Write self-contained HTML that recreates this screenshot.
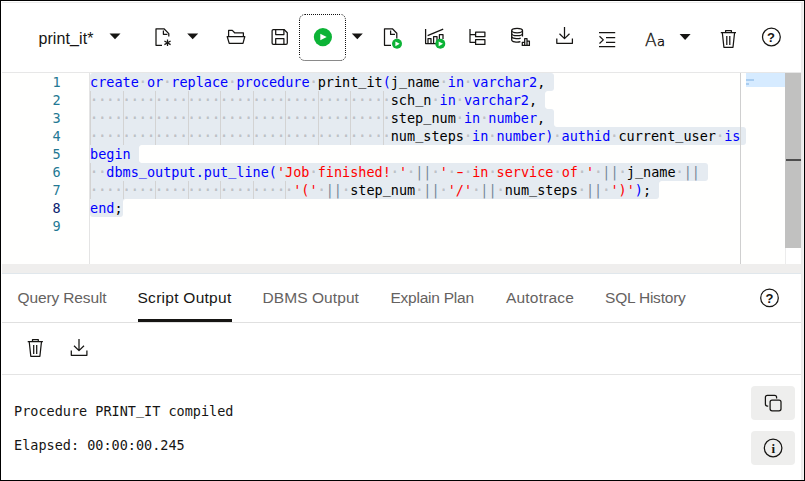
<!DOCTYPE html>
<html lang="en">
<head>
<meta charset="utf-8">
<title>SQL Worksheet</title>
<style>
html,body{margin:0;padding:0;}
body{width:805px;height:481px;overflow:hidden;background:#fff;position:relative;
  font-family:"Liberation Sans",sans-serif;color:#161513;}
.abs{position:absolute;}
#frame{left:0;top:0;width:803px;height:479px;border:1px solid #000;z-index:50;pointer-events:none;}
#topline{left:2px;top:2px;width:801px;height:1px;background:#ececec;}
#rightstrip{left:801px;top:2px;width:3px;height:478px;background:linear-gradient(90deg,#ebebeb 0,#ebebeb 2px,#f4f4f4 2px);z-index:40;}

/* toolbar */
#toolbar{left:1px;top:1px;width:803px;height:71px;background:#fff;}
#tbline{left:2px;top:72px;width:800px;height:1px;background:#e7e7e7;}
#wsname{left:38.4px;top:29px;letter-spacing:0.1px;font-size:16px;line-height:20px;white-space:nowrap;}
#aa{left:644.5px;top:26px;font-family:"DejaVu Sans Light","DejaVu Sans","Liberation Sans",sans-serif;font-weight:200;font-size:18.5px;line-height:28px;white-space:nowrap;transform-origin:0 0;transform:scaleX(0.92);-webkit-text-stroke:0.4px #161513;}
#aa .sm{font-size:13px;margin-left:0.3px;display:inline-block;transform-origin:0 0;transform:scaleX(1.1);}
.q{font-weight:bold;font-size:13px;line-height:14px;width:12px;text-align:center;}

/* editor */
#editor{left:1px;top:73px;width:803px;height:191px;background:#fffffe;overflow:hidden;}
#gutterline{left:89px;top:73px;width:1px;height:191px;background:#e4e4e4;}
#ruler{left:740px;top:73px;width:1px;height:191px;background:#cfcfcf;}
.mono{font-family:"DejaVu Sans Mono","Liberation Mono",monospace;font-size:13.5px;}
.ln{left:0.6px;width:60px;text-align:right;height:18px;line-height:18px;color:#237893;}
.ln.act{color:#0b216f;}
.sel{background:#e5ebf1;height:18px;}
.cl{left:90px;height:18px;line-height:18px;white-space:pre;color:#000;}
.k{color:#0000ff;}
.s{color:#ff0000;}
.w{position:relative;}
.w::before{content:"\00b7";position:absolute;left:0;top:0;line-height:normal;white-space:pre;color:rgba(51,51,51,0.24);font-weight:bold;}
.w2::before{content:"\00b7\00b7";}
.w25::before{content:"\00b7\00b7\00b7\00b7\00b7\00b7\00b7\00b7\00b7\00b7\00b7\00b7\00b7\00b7\00b7\00b7\00b7\00b7\00b7\00b7\00b7\00b7\00b7\00b7\00b7";}
.w37::before{content:"\00b7\00b7\00b7\00b7\00b7\00b7\00b7\00b7\00b7\00b7\00b7\00b7\00b7\00b7\00b7\00b7\00b7\00b7\00b7\00b7\00b7\00b7\00b7\00b7\00b7\00b7\00b7\00b7\00b7\00b7\00b7\00b7\00b7\00b7\00b7\00b7\00b7";}
.o{color:#778899;}
.u{position:relative;top:-2px;}
.u1{position:relative;top:-1.3px;}
.hy{display:inline-block;transform:scaleX(1.55);}
.cc{width:3px;height:3px;}
.ct{background:radial-gradient(circle at 100% 100%,rgba(229,235,241,0) 2.5px,#e5ebf1 3.5px);}
.cb{background:radial-gradient(circle at 100% 0%,rgba(229,235,241,0) 2.5px,#e5ebf1 3.5px);}
.ig{width:1px;background:#d3d3d3;}
#mmhl{left:746px;top:73px;width:39px;height:14px;background:#d6ebff;}
#sbtrack{left:785px;top:73px;width:16px;height:191px;background:#fff;border-left:1px solid #ececec;box-sizing:border-box;}
#sbslider{left:785px;top:73px;width:16px;height:175px;background:#c1c1c0;}
#sbmark{left:786px;top:159px;width:15px;height:2px;background:#4d4d4d;}

/* splitter */
#splitter{left:2px;top:264px;width:800px;height:9px;background:#efeeed;}
#splitline{left:2px;top:273px;width:800px;height:1px;background:#e0e7ec;}

/* tabs */
.tab{top:288px;font-size:15.5px;line-height:20px;white-space:nowrap;color:#65625f;}
.tab.on{color:#161513;}
#tabul{left:138px;top:319px;width:94px;height:3px;background:#161513;}
#tabline{left:2px;top:322px;width:800px;height:1px;background:#e0e0e0;}
#tb2line{left:2px;top:374px;width:800px;height:1px;background:#e4e4e4;}

#infoi{left:767.2px;top:441.3px;width:12px;text-align:center;font-family:"Liberation Serif",serif;font-weight:bold;font-size:13px;line-height:16px;z-index:12;}
/* output */
.out{left:14px;height:17px;line-height:17px;white-space:pre;color:#161513;}
.sbtn{left:751px;width:44px;height:34px;border-radius:4px;background:#eeeeed;}
</style>
</head>
<body>
<div class="abs" id="toolbar"></div>
<div class="abs" id="topline"></div>
<div class="abs" id="tbline"></div>

<div class="abs" id="wsname">print<span class="u1">_</span>it*</div>
<div class="abs" id="aa">A<span class="sm">a</span></div>
<div class="abs q" style="left:765px;top:31px;">?</div>

<!-- EDITOR -->
<div class="abs" id="editor"></div>
<div class="abs" id="gutterline"></div>

<div id="lines">
<div class="abs sel" style="left:90px;top:73px;width:463.5px;border-radius:3px 3px 3px 0;"></div>
<div class="abs mono ln" style="top:73px;">1</div>
<div class="abs mono cl" style="top:73px;"><span class="k">create</span><span class="w w1"> </span><span class="k">or</span><span class="w w1"> </span><span class="k">replace</span><span class="w w1"> </span><span class="k">procedure</span><span class="w w1"> </span>print<span class="u">_</span>it<span class="k">(</span>j<span class="u">_</span>name<span class="w w1"> </span><span class="k">in</span><span class="w w1"> </span><span class="k">varchar2</span>,</div>
<div class="abs sel" style="left:90px;top:91px;width:455.3px;border-radius:0;"></div>
<div class="abs cc ct" style="left:545.3px;top:91px;"></div>
<div class="abs cc cb" style="left:545.3px;top:106px;"></div>
<div class="abs ig" style="left:90px;top:91px;height:18px;"></div>
<div class="abs ig" style="left:123px;top:91px;height:18px;"></div>
<div class="abs ig" style="left:155px;top:91px;height:18px;"></div>
<div class="abs ig" style="left:188px;top:91px;height:18px;"></div>
<div class="abs ig" style="left:220px;top:91px;height:18px;"></div>
<div class="abs ig" style="left:253px;top:91px;height:18px;"></div>
<div class="abs ig" style="left:285px;top:91px;height:18px;"></div>
<div class="abs ig" style="left:318px;top:91px;height:18px;"></div>
<div class="abs ig" style="left:350px;top:91px;height:18px;"></div>
<div class="abs ig" style="left:383px;top:91px;height:18px;"></div>
<div class="abs mono ln" style="top:91px;">2</div>
<div class="abs mono cl" style="top:91px;"><span class="w w37">                                     </span>sch<span class="u">_</span>n<span class="w w1"> </span><span class="k">in</span><span class="w w1"> </span><span class="k">varchar2</span>,</div>
<div class="abs sel" style="left:90px;top:109px;width:463.5px;border-radius:0 3px 0 0;"></div>
<div class="abs cc cb" style="left:553.5px;top:124px;"></div>
<div class="abs ig" style="left:90px;top:109px;height:18px;"></div>
<div class="abs ig" style="left:123px;top:109px;height:18px;"></div>
<div class="abs ig" style="left:155px;top:109px;height:18px;"></div>
<div class="abs ig" style="left:188px;top:109px;height:18px;"></div>
<div class="abs ig" style="left:220px;top:109px;height:18px;"></div>
<div class="abs ig" style="left:253px;top:109px;height:18px;"></div>
<div class="abs ig" style="left:285px;top:109px;height:18px;"></div>
<div class="abs ig" style="left:318px;top:109px;height:18px;"></div>
<div class="abs ig" style="left:350px;top:109px;height:18px;"></div>
<div class="abs ig" style="left:383px;top:109px;height:18px;"></div>
<div class="abs mono ln" style="top:109px;">3</div>
<div class="abs mono cl" style="top:109px;"><span class="w w37">                                     </span>step<span class="u">_</span>num<span class="w w1"> </span><span class="k">in</span><span class="w w1"> </span><span class="k">number</span>,</div>
<div class="abs sel" style="left:90px;top:127px;width:656.0px;border-radius:0 3px 3px 0;"></div>
<div class="abs ig" style="left:90px;top:127px;height:18px;"></div>
<div class="abs ig" style="left:123px;top:127px;height:18px;"></div>
<div class="abs ig" style="left:155px;top:127px;height:18px;"></div>
<div class="abs ig" style="left:188px;top:127px;height:18px;"></div>
<div class="abs ig" style="left:220px;top:127px;height:18px;"></div>
<div class="abs ig" style="left:253px;top:127px;height:18px;"></div>
<div class="abs ig" style="left:285px;top:127px;height:18px;"></div>
<div class="abs ig" style="left:318px;top:127px;height:18px;"></div>
<div class="abs ig" style="left:350px;top:127px;height:18px;"></div>
<div class="abs ig" style="left:383px;top:127px;height:18px;"></div>
<div class="abs mono ln" style="top:127px;">4</div>
<div class="abs mono cl" style="top:127px;"><span class="w w37">                                     </span>num<span class="u">_</span>steps<span class="w w1"> </span><span class="k">in</span><span class="w w1"> </span><span class="k">number)</span><span class="w w1"> </span><span class="k">authid</span><span class="w w1"> </span>current<span class="u">_</span>user<span class="w w1"> </span><span class="k">is</span></div>
<div class="abs sel" style="left:90px;top:145px;width:49.0px;border-radius:0;"></div>
<div class="abs cc ct" style="left:139px;top:145px;"></div>
<div class="abs cc cb" style="left:139px;top:160px;"></div>
<div class="abs mono ln" style="top:145px;">5</div>
<div class="abs mono cl" style="top:145px;"><span class="k">begin</span></div>
<div class="abs sel" style="left:90px;top:163px;width:618.0px;border-radius:0 3px 3px 0;"></div>
<div class="abs ig" style="left:90px;top:163px;height:18px;"></div>
<div class="abs mono ln" style="top:163px;">6</div>
<div class="abs mono cl" style="top:163px;"><span class="w w2">  </span><span class="k">dbms<span class="u">_</span>output.put<span class="u">_</span>line(</span><span class="s">'Job</span><span class="w w1"> </span><span class="s">finished!</span><span class="w w1"> </span><span class="s">'</span><span class="w w1"> </span><span class="o">||</span><span class="w w1"> </span><span class="s">'</span><span class="w w1"> </span><span class="s"><span class="hy">-</span></span><span class="w w1"> </span><span class="s">in</span><span class="w w1"> </span><span class="s">service</span><span class="w w1"> </span><span class="s">of</span><span class="w w1"> </span><span class="s">'</span><span class="w w1"> </span><span class="o">||</span><span class="w w1"> </span>j<span class="u">_</span>name<span class="w w1"> </span><span class="o">||</span></div>
<div class="abs sel" style="left:90px;top:181px;width:569.0px;border-radius:0 0 3px 0;"></div>
<div class="abs cc ct" style="left:659px;top:181px;"></div>
<div class="abs ig" style="left:90px;top:181px;height:18px;"></div>
<div class="abs ig" style="left:123px;top:181px;height:18px;"></div>
<div class="abs ig" style="left:155px;top:181px;height:18px;"></div>
<div class="abs ig" style="left:188px;top:181px;height:18px;"></div>
<div class="abs ig" style="left:220px;top:181px;height:18px;"></div>
<div class="abs ig" style="left:253px;top:181px;height:18px;"></div>
<div class="abs ig" style="left:285px;top:181px;height:18px;"></div>
<div class="abs mono ln" style="top:181px;">7</div>
<div class="abs mono cl" style="top:181px;"><span class="w w25">                         </span><span class="s">'('</span><span class="w w1"> </span><span class="o">||</span><span class="w w1"> </span>step<span class="u">_</span>num<span class="w w1"> </span><span class="o">||</span><span class="w w1"> </span><span class="s">'/'</span><span class="w w1"> </span><span class="o">||</span><span class="w w1"> </span>num<span class="u">_</span>steps<span class="w w1"> </span><span class="o">||</span><span class="w w1"> </span><span class="s">')'</span><span class="k">)</span>;</div>
<div class="abs sel" style="left:90px;top:199px;width:32.5px;border-radius:0 0 3px 3px;"></div>
<div class="abs cc ct" style="left:122.5px;top:199px;"></div>
<div class="abs mono ln act" style="top:199px;">8</div>
<div class="abs mono cl" style="top:199px;"><span class="k">end</span>;</div>
<div class="abs mono ln" style="top:217px;">9</div>
</div>

<div class="abs" id="ruler"></div>
<div class="abs" id="mmhl"></div>
<div class="abs" id="sbtrack"></div>
<div class="abs" id="sbslider"></div>
<div class="abs" id="sbmark"></div>

<div class="abs" id="splitter"></div>
<div class="abs" id="splitline"></div>

<!-- TABS -->
<div class="abs tab" style="left:17.5px;letter-spacing:-0.13px;">Query Result</div>
<div class="abs tab on" style="left:137.5px;letter-spacing:0.27px;">Script Output</div>
<div class="abs tab" style="left:262.5px;letter-spacing:0.08px;">DBMS Output</div>
<div class="abs tab" style="left:390.5px;letter-spacing:-0.24px;">Explain Plan</div>
<div class="abs tab" style="left:506px;letter-spacing:0.19px;">Autotrace</div>
<div class="abs tab" style="left:605px;letter-spacing:-0.21px;">SQL History</div>
<div class="abs" id="tabul"></div>
<div class="abs" id="tabline"></div>
<div class="abs q" style="left:763.4px;top:292px;">?</div>
<div class="abs" id="tb2line"></div>

<!-- OUTPUT -->
<div class="abs mono out" style="top:403px;">Procedure PRINT<span class="u">_</span>IT compiled</div>
<div class="abs mono out" style="top:437px;">Elapsed: 00:00:00.245</div>
<div class="abs sbtn" style="top:386px;"></div>
<div class="abs sbtn" style="top:431px;"></div>
<div class="abs" id="infoi">i</div>

<svg class="abs" id="icons" style="left:0;top:0;z-index:10;" width="805" height="481" viewBox="0 0 805 481" fill="none" stroke="#161513" stroke-width="1.25" stroke-linejoin="round">
<g stroke="none" fill="#a9cdf0"><rect x="746" y="79" width="8" height="2"/><rect x="746" y="83" width="3" height="2"/></g>
<!-- focus ring -->
<g stroke="#111" stroke-width="1" stroke-dasharray="1 1" fill="none">
<path d="M305 14.5H341"/>
<path d="M345.5 20V56"/>
<path d="M299.5 20V56"/>
<path d="M299.5 20A5.5 5.5 0 0 1 305 14.5M341 14.5A4.5 5.5 0 0 1 345.5 20M345.5 56A5.5 4.5 0 0 1 341 60.5M305 60.5A5.5 4.5 0 0 1 299.5 56" stroke-dashoffset="0.5"/>
</g>
<path d="M305 60.5H341" stroke="#8a8a8a" stroke-width="1"/>
<!-- carets -->
<g fill="#161513" stroke="none">
<path d="M109.5 33.4h11l-5.5 5.8z"/>
<path d="M187.2 33.4h11l-5.5 5.8z"/>
<path d="M351.8 33.4h11l-5.5 5.8z"/>
<path d="M679.6 34.1h11l-5.5 5.8z"/>
</g>
<!-- new file -->
<path d="M162 45.3H156V28.8H164L168.8 33.6V36.6"/>
<path d="M163.4 30.6V34.3H167.4"/>
<path d="M167.5 39.4V46.1M164.4 41L170.6 44.6M164.4 44.6L170.6 41"/>
<!-- folder open -->
<path d="M228.6 36.5V30.4H232.3L234.6 32.8H243.4V36.5"/>
<path d="M227.2 36.5H244.8L243 43.4H229.2Z"/>
<!-- save -->
<path d="M273.4 29.5H284L287.3 32.8V43a1.3 1.3 0 0 1-1.3 1.3H273.4a1.3 1.3 0 0 1-1.3-1.3V30.8a1.3 1.3 0 0 1 1.3-1.3Z"/>
<path d="M275.7 29.5V34.5H283.9V29.5M275.7 44.3V38.5H283.9V44.3"/>
<!-- run -->
<circle cx="322.9" cy="37.1" r="9.1" fill="#0cb336" stroke="none"/>
<path d="M320.3 33.8L326.7 37L320.3 40.2Z" fill="#fff" stroke="none"/>
<!-- run script (doc + play) -->
<path d="M391 45.3H384.5V28.8H392.4L396.8 33.2V38.5"/>
<path d="M390.6 30.6V34.4H395"/>
<circle cx="397" cy="43.8" r="5" fill="#0cb336" stroke="none"/>
<path d="M395.4 41.4L399.7 43.8L395.4 46.2Z" fill="#fff" stroke="none"/>
<!-- chart + play -->
<path d="M425.6 29V43.5H436"/>
<path d="M427.6 35.6L443.2 29.2"/>
<path d="M428 43.5V38.6H431V43.5M433.6 43.5V36.6H437V41M439.4 39V34.6H443V39"/>
<circle cx="440.3" cy="43.8" r="5" fill="#0cb336" stroke="none"/>
<path d="M438.7 41.4L443 43.8L438.7 46.2Z" fill="#fff" stroke="none"/>
<!-- tree -->
<path d="M470 29V42.3H475.5M470 34.5H475.5"/>
<rect x="475.6" y="32.1" width="9.3" height="4.6"/>
<rect x="475.6" y="39.7" width="9.3" height="4.7"/>
<!-- database + bars -->
<ellipse cx="517.1" cy="30.6" rx="5.4" ry="2.2"/>
<path d="M511.7 30.6V39.9M522.5 30.6V36.4"/>
<path d="M511.7 33.4a5.4 2.2 0 0 0 10.8 0M511.7 36.4A5.4 2.2 0 0 0 520.7 38.04M511.7 39.9A5.4 2.2 0 0 0 520.4 41.64"/>
<path d="M522.3 45.4V42.3H524.7M524.7 45.4V38.6H527V45.4M527 41H529.4V45.4M521.7 45.4H530"/>
<!-- download -->
<path d="M564.5 27V38.3M559.5 33.7L564.5 38.6L569.5 33.7M556.8 38.4V43.3H572.4V38.4"/>
<!-- indent -->
<path d="M599 32.6H615.2M606 37.7H615.2M606 42.3H615.2M599 46.5H615.2M599.5 36.2L603.3 39.9L599.5 43.5"/>
<!-- trash -->
<path id="trash" d="M720.8 32.5H736M725.6 32.5V30.5H731.4V32.5M722.3 32.5L723.9 47.3H733L734.6 32.5M726.8 36V45M729.8 36V45"/>
<!-- help top -->
<circle cx="771.4" cy="37" r="8.9"/>
<!-- toolbar 2 -->
<path transform="translate(-693.1 309)" d="M720.8 32.5H736M725.6 32.5V30.5H731.4V32.5M722.3 32.5L723.9 47.3H733L734.6 32.5M726.8 36V45M729.8 36V45"/>
<path transform="translate(-485.5 312)" d="M564.5 27V38.3M559.5 33.7L564.5 38.6L569.5 33.7M556.8 38.4V43.3H572.4V38.4"/>
<!-- help tabs -->
<circle cx="769.5" cy="297.9" r="8.8"/>
<!-- copy -->
<path d="M768.2 406H767.4a2 2 0 0 1-2-2V397.3a2 2 0 0 1 2-2H774.6a2 2 0 0 1 2 2V398.4"/>
<rect x="770.1" y="400" width="10.9" height="10.8" rx="2"/>
<!-- info -->
<circle cx="773.1" cy="448" r="8.8"/>
</svg>
<div class="abs" id="rightstrip"></div>
<div class="abs" id="frame"></div>
</body>
</html>
